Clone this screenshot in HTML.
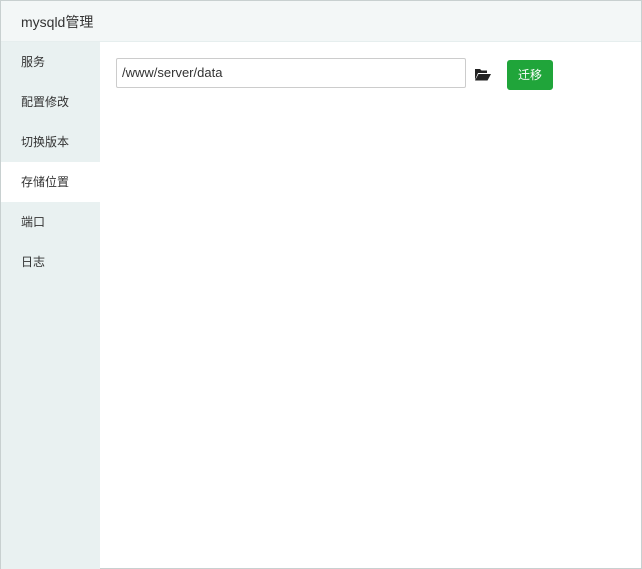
<!DOCTYPE html>
<html><head><meta charset="utf-8"><style>
*{margin:0;padding:0;box-sizing:border-box}
body{width:642px;height:569px;overflow:hidden;background:#fff;font-family:"Liberation Sans","Noto Sans CJK SC",sans-serif;position:relative;border:1px solid #c8d0d0}
.hd{position:absolute;left:0;top:0;width:640px;height:41px;background:#f3f7f7;font-size:14px;color:#333;padding:11px 0 0 20px;border-bottom:1px solid #e6eeee}
.sb{position:absolute;left:0;top:41px;width:99px;height:527px;background:#e9f1f1}
.sb div{height:40px;line-height:40px;padding-left:20px;font-size:12px;color:#333}
.sb .on{background:#fff}
.in{position:absolute;left:115px;top:57px;width:350px;height:30px;border:1px solid #ccc;border-radius:2px;font-size:13px;color:#333;padding:6px 0 0 5px}
.bt{position:absolute;left:506px;top:59px;width:46px;height:30px;background:#20a53a;border-radius:3px;color:#fff;font-size:12px;text-align:center;line-height:30px}
</style></head><body>
<div class="hd">mysqld管理</div>
<div class="sb"><div>服务</div><div>配置修改</div><div>切换版本</div><div class="on">存储位置</div><div>端口</div><div>日志</div></div>
<div class="in">/www/server/data</div>
<svg style="position:absolute;left:473px;top:67px" width="17" height="13" viewBox="0 0 17 13"><path d="M1 1h5l1.5 1.5H13V5H4L1 12z" fill="#222"/><path d="M4.5 6H17L13.5 12.5H1z" fill="#222"/></svg>
<div class="bt">迁移</div>
</body></html>
